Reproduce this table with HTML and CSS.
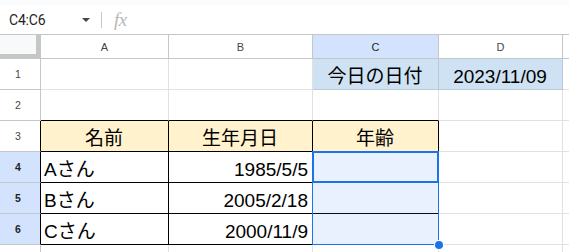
FILE: index.html
```html
<!DOCTYPE html>
<html lang="ja">
<head>
<meta charset="utf-8">
<title>年齢の計算</title>
<link rel="stylesheet" href="styles.css">
</head>
<body>
<div class="toolbar">
  <div class="namebox">
    <span class="ref">C4:C6</span>
    <span class="caret"></span>
  </div>
  <span class="divider"></span>
  <span class="fx">fx</span>
</div>

<div class="sheet">
  <div class="corner"></div>
  <div class="colhead">A</div>
  <div class="colhead">B</div>
  <div class="colhead picked">C</div>
  <div class="colhead">D</div>
  <div class="colhead"></div>

  <div class="rowhead">1</div>
  <div class="cell"></div>
  <div class="cell"></div>
  <div class="cell tinted center">今日の日付</div>
  <div class="cell tinted center">2023/11/09</div>
  <div class="cell"></div>

  <div class="rowhead">2</div>
  <div class="cell above"></div>
  <div class="cell above"></div>
  <div class="cell above"></div>
  <div class="cell"></div>
  <div class="cell"></div>

  <div class="rowhead framed">3</div>
  <div class="cell boxed title center">名前</div>
  <div class="cell boxed title center">生年月日</div>
  <div class="cell boxed title center">年齢</div>
  <div class="cell"></div>
  <div class="cell"></div>

  <div class="rowhead framed picked">4</div>
  <div class="cell boxed">Aさん</div>
  <div class="cell boxed num">1985/5/5</div>
  <div class="cell boxed age r4"></div>
  <div class="cell"></div>
  <div class="cell"></div>

  <div class="rowhead framed picked">5</div>
  <div class="cell boxed">Bさん</div>
  <div class="cell boxed num">2005/2/18</div>
  <div class="cell boxed age r5"></div>
  <div class="cell"></div>
  <div class="cell"></div>

  <div class="rowhead framed picked">6</div>
  <div class="cell boxed">Cさん</div>
  <div class="cell boxed num">2000/11/9</div>
  <div class="cell boxed age r6"></div>
  <div class="cell"></div>
  <div class="cell"></div>

  <div class="rowhead"></div>
  <div class="cell"></div>
  <div class="cell"></div>
  <div class="cell"></div>
  <div class="cell"></div>
  <div class="cell"></div>

  <div class="selection">
    <div class="active"></div>
    <span class="handle"></span>
  </div>
</div>
</body>
</html>
```

FILE: styles.css
```css
* {
  box-sizing: border-box;
}

html,
body {
  margin: 0;
  height: 100%;
  overflow: hidden;
  background: #fff;
}

body {
  font-family: "Liberation Sans", "Noto Sans CJK JP", sans-serif;
  color: #000;
}

/* formula bar */
.toolbar {
  height: 35px;
  border-top: 5px solid #f9fbfd;
  border-bottom: 1px solid #c4c7c5;
  display: flex;
  align-items: center;
}

.namebox {
  width: 101px;
  padding-left: 9px;
  padding-right: 11px;
  display: flex;
  align-items: center;
  justify-content: space-between;
}

.ref {
  font-family: Roboto, "Liberation Sans", sans-serif;
  font-size: 14px;
  color: #1f1f1f;
  letter-spacing: -0.2px;
}

.caret {
  width: 0;
  height: 0;
  border-left: 4px solid transparent;
  border-right: 4px solid transparent;
  border-top: 4px solid #444746;
}

.divider {
  width: 1px;
  height: 16px;
  background: #c4c7c5;
}

.fx {
  margin-left: 12px;
  font-family: "Liberation Serif", serif;
  font-style: italic;
  font-size: 19px;
  color: #b8b8b8;
  letter-spacing: -0.5px;
}

/* grid */
.sheet {
  display: grid;
  grid-template-columns: 41px 128px 144px 126px 124px 1fr;
  grid-template-rows: 24px repeat(7, 31px);
}

.corner {
  background: #f8f9fa;
  border-right: 1px solid #c4c7c5;
  border-bottom: 1px solid #c4c7c5;
  box-shadow: inset -4px -4px 0 #c4c7c5;
}

.colhead {
  border-right: 1px solid #c4c7c5;
  border-bottom: 1px solid #c4c7c5;
  display: flex;
  align-items: center;
  justify-content: center;
  font-size: 11px;
  color: #444746;
}

.colhead.picked {
  background: #d3e3fd;
  color: #1f1f1f;
}

.rowhead {
  border-right: 1px solid #c4c7c5;
  border-bottom: 1px solid #c4c7c5;
  display: flex;
  align-items: center;
  justify-content: center;
  padding-right: 4px;
  font-size: 10.5px;
  color: #444746;
}

.rowhead.picked {
  background: #d3e3fd;
  color: #1f1f1f;
  font-weight: bold;
}

.rowhead.framed {
  border-right-color: #000;
}

.cell {
  border-right: 1px solid #e1e1e1;
  border-bottom: 1px solid #e1e1e1;
  display: flex;
  align-items: flex-end;
  padding: 0 4px 1px 3px;
  font-size: 19px;
  line-height: 22px;
  white-space: nowrap;
}

.center {
  justify-content: center;
}

.num {
  justify-content: flex-end;
}

.tinted {
  background: #cfe2f3;
  border-right-color: #b9c9d8;
  border-bottom-color: #b9c9d8;
}

.above {
  border-bottom-color: #000;
}

.boxed {
  border-right-color: #000;
  border-bottom-color: #000;
}

.title {
  background: #fff2cc;
}

/* age column cells share their tracks with the selection overlay */
.age {
  grid-column: 4;
}

.r4 {
  grid-row: 5;
}

.r5 {
  grid-row: 6;
}

.r6 {
  grid-row: 7;
}

/* selected range C4:C6 */
.selection {
  grid-column: 4;
  grid-row: 5 / 8;
  margin: -1px 0 0 -1px;
  position: relative;
  border: 1px solid #1a73e8;
  background: rgba(26, 115, 232, 0.1);
}

.active {
  margin: -1px 0 0 -1px;
  width: calc(100% + 2px);
  height: 32px;
  border: 2px solid #1a73e8;
}

.handle {
  position: absolute;
  right: -5px;
  bottom: -5px;
  width: 8px;
  height: 8px;
  border-radius: 50%;
  background: #1a73e8;
  box-shadow: 0 0 0 1px #fff;
}
```
